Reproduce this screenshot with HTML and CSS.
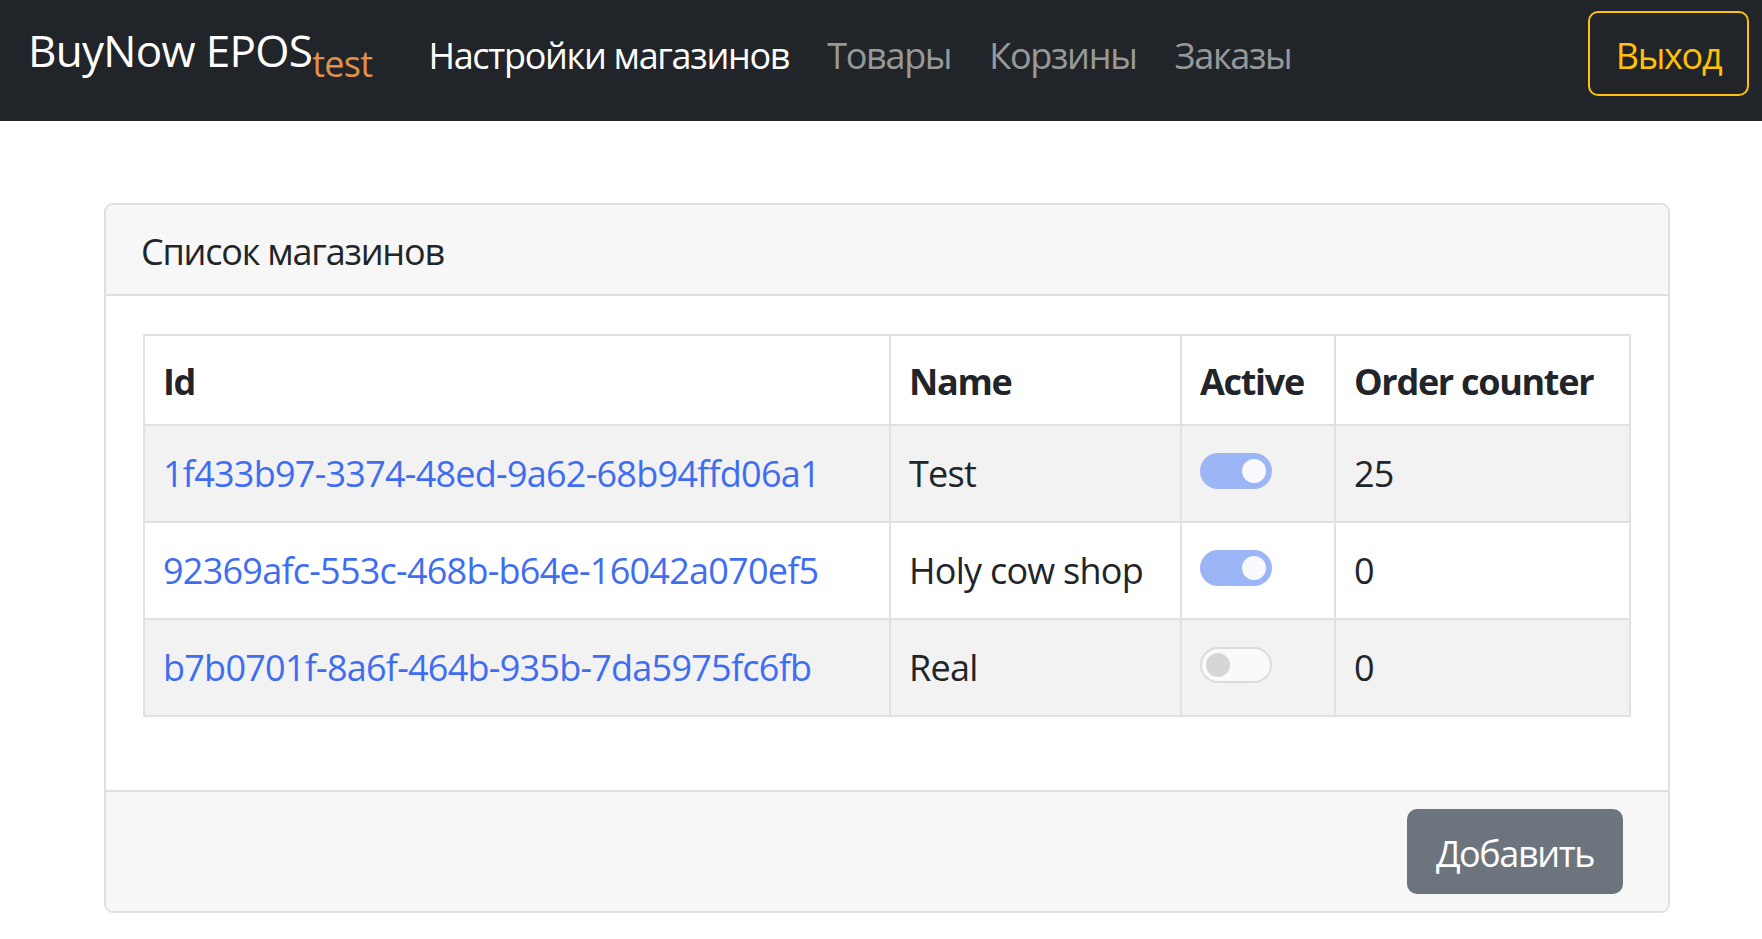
FILE: index.html
```html
<!DOCTYPE html>
<html lang="ru">
<head>
<meta charset="utf-8">
<title>BuyNow EPOS</title>
<link rel="stylesheet" href="styles.css">
</head>
<body>
<nav class="navbar">
  <a class="brand" href="#">BuyNow EPOS<sub>test</sub></a>
  <ul class="nav">
    <li><a class="nav-link active" href="#">Настройки магазинов</a></li>
    <li><a class="nav-link" href="#">Товары</a></li>
    <li><a class="nav-link" href="#">Корзины</a></li>
    <li><a class="nav-link" href="#">Заказы</a></li>
  </ul>
  <button class="btn-logout" type="button">Выход</button>
</nav>
<main class="page">
  <section class="card">
    <header class="card-header">Список магазинов</header>
    <div class="card-body">
      <table class="table">
        <thead>
          <tr>
            <th class="col-id">Id</th>
            <th class="col-name">Name</th>
            <th class="col-active">Active</th>
            <th>Order counter</th>
          </tr>
        </thead>
        <tbody>
          <tr>
            <td><a class="link" href="#">1f433b97-3374-48ed-9a62-68b94ffd06a1</a></td>
            <td>Test</td>
            <td><span class="switch on"></span></td>
            <td>25</td>
          </tr>
          <tr>
            <td><a class="link" href="#">92369afc-553c-468b-b64e-16042a070ef5</a></td>
            <td>Holy cow shop</td>
            <td><span class="switch on"></span></td>
            <td>0</td>
          </tr>
          <tr>
            <td><a class="link" href="#">b7b0701f-8a6f-464b-935b-7da5975fc6fb</a></td>
            <td>Real</td>
            <td><span class="switch"></span></td>
            <td>0</td>
          </tr>
        </tbody>
      </table>
    </div>
    <footer class="card-footer">
      <button class="btn-add" type="button">Добавить</button>
    </footer>
  </section>
</main>
</body>
</html>
```
FILE: styles.css
```css
body {
  margin: 0;
  font-family: "Open Sans", "Liberation Sans", sans-serif;
  color: #212529;
  background: #fff;
}

.navbar {
  display: flex;
  align-items: center;
  height: 121px;
  box-sizing: border-box;
  padding: 11px 13px 25px 28px;
  background: #212529;
}

.brand {
  align-self: flex-start;
  margin-top: 6px;
  margin-right: 37px;
  font-size: 44px;
  line-height: 66px;
  letter-spacing: -0.7px;
  color: #fff;
  text-decoration: none;
  white-space: nowrap;
}

.brand sub {
  font-size: 36px;
  line-height: 0;
  vertical-align: -10px;
  color: #e0914b;
}

.nav {
  display: flex;
  list-style: none;
  margin: 4px 0 0;
  padding: 0;
}

.nav-link {
  display: block;
  padding: 0 19px;
  font-size: 36px;
  line-height: 54px;
  letter-spacing: -1.3px;
  color: rgba(255, 255, 255, 0.55);
  text-decoration: none;
  white-space: nowrap;
}

.nav-link.active {
  color: #fff;
}

.btn-logout {
  margin-left: auto;
  width: 161px;
  height: 85px;
  padding: 4px 0 0;
  border: 2px solid #ffc107;
  border-radius: 10px;
  background: transparent;
  color: #ffc107;
  font-family: inherit;
  font-size: 36px;
  letter-spacing: -1.3px;
}

.card {
  margin: 82px 92px 0 104px;
  border: 2px solid #dfdfdf;
  border-radius: 9px;
  overflow: hidden;
}

.card-header {
  padding: 20px 35px 15px;
  background: #f7f7f7;
  border-bottom: 2px solid #dfdfdf;
  font-size: 36px;
  line-height: 54px;
  letter-spacing: -1.2px;
}

.card-body {
  padding: 38px 37px;
}

.table {
  width: 100%;
  margin-bottom: 35px;
  border-collapse: separate;
  border-spacing: 0;
  table-layout: fixed;
  border-top: 2px solid #dee2e6;
  border-left: 2px solid #dee2e6;
  font-size: 36px;
  line-height: 54px;
}

.table th,
.table td {
  box-sizing: border-box;
  padding: 21px 18px 20px;
  border-right: 2px solid #dee2e6;
  border-bottom: 2px solid #dee2e6;
  text-align: left;
  vertical-align: top;
  white-space: nowrap;
  letter-spacing: -0.75px;
}

.table th {
  padding: 19px 18px 15px;
  font-weight: 700;
  letter-spacing: -1.3px;
}

.col-id { width: 746px; }
.col-name { width: 291px; }
.col-active { width: 154px; }

.table tbody tr:nth-child(odd) {
  background: #f2f2f2;
}

.link {
  color: #3f6df2;
  text-decoration: none;
}

.switch {
  position: relative;
  display: inline-block;
  box-sizing: border-box;
  width: 72px;
  height: 36px;
  vertical-align: -2px;
  border: 2px solid #dcdcdc;
  border-radius: 18px;
  background: #fafafa;
}

.switch::after {
  content: "";
  position: absolute;
  top: 4px;
  left: 4px;
  width: 24px;
  height: 24px;
  border-radius: 50%;
  background: #d6d6d6;
}

.switch.on {
  border-color: #9cb5f6;
  background: #9cb5f6;
}

.switch.on::after {
  left: auto;
  right: 4px;
  background: #f8f9fa;
}

.card-footer {
  display: flex;
  justify-content: flex-end;
  padding: 17px 45px;
  background: #f7f7f7;
  border-top: 2px solid #dfdfdf;
}

.btn-add {
  width: 216px;
  height: 85px;
  padding: 4px 0 0;
  border: none;
  border-radius: 10px;
  background: #6c757d;
  color: #fff;
  font-family: inherit;
  font-size: 36px;
  letter-spacing: -1.4px;
}
```
